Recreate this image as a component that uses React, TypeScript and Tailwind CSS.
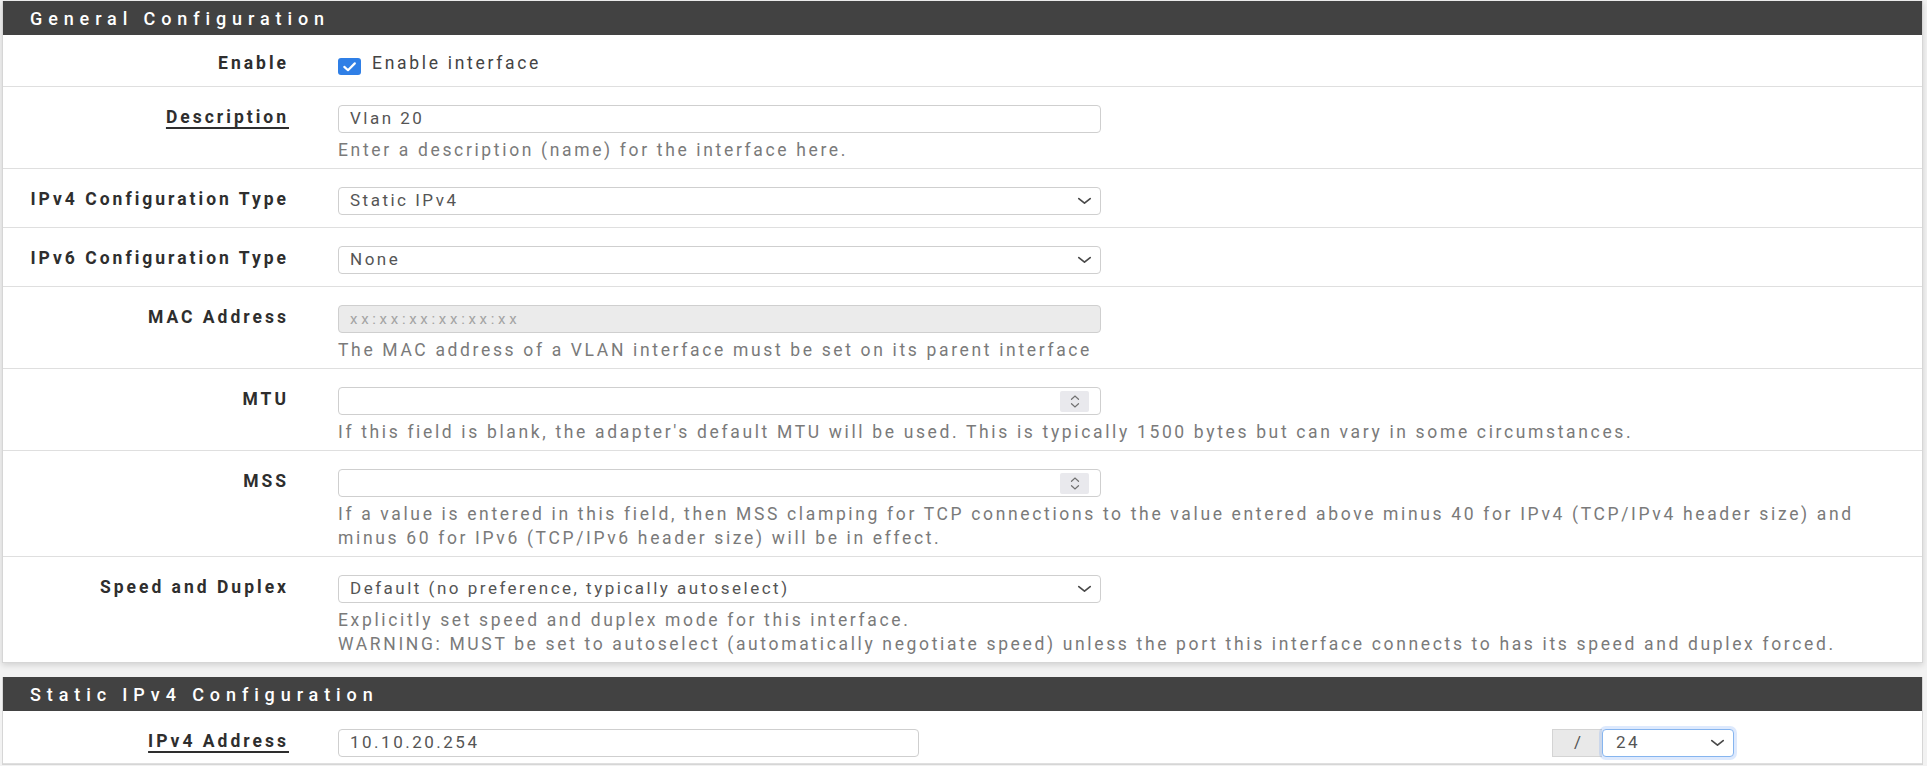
import React from "react";

const Chevron = () => (
  <svg width="15" height="8" viewBox="0 0 15 8" className="shrink-0">
    <path d="M1.8 1.6 L7.5 6.2 L13.2 1.6" fill="none" stroke="#4a4a4a" strokeWidth="1.7" strokeLinecap="round" strokeLinejoin="round" />
  </svg>
);

const Spinner = () => (
  <div className="flex h-[21px] w-[29px] shrink-0 flex-col items-center justify-center gap-[3px] rounded-[2px] bg-[#e9e9ed]">
    <svg width="12" height="5" viewBox="0 0 12 5">
      <path d="M2.5 4.3 L6 1 L9.5 4.3" fill="none" stroke="#707070" strokeWidth="1.2" strokeLinecap="round" />
    </svg>
    <svg width="12" height="5" viewBox="0 0 12 5">
      <path d="M2.5 0.7 L6 4 L9.5 0.7" fill="none" stroke="#707070" strokeWidth="1.2" strokeLinecap="round" />
    </svg>
  </div>
);

const PanelHeader = ({ title }: { title: string }) => (
  <div className="flex h-[34px] items-center bg-[#424242] pl-[27px] text-[18px] font-medium tracking-[5.9px] text-white">
    {title}
  </div>
);

const Label = ({ text, required }: { text: string; required?: boolean }) => (
  <div className="w-[286px] shrink-0 text-right text-[17.5px] font-bold leading-[24px] tracking-[3px] text-[#2e2e2e]">
    <span className={required ? "underline decoration-[1.5px] underline-offset-[4px]" : ""}>{text}</span>
  </div>
);

const Help = ({ children }: { children: React.ReactNode }) => (
  <div className="mt-[5px] whitespace-nowrap text-[17.5px] leading-[24px] tracking-[2.65px] text-[#7a7a7a]">{children}</div>
);

const Row = ({
  label,
  required,
  help,
  children,
}: {
  label: string;
  required?: boolean;
  help?: React.ReactNode;
  children: React.ReactNode;
}) => (
  <div className={"flex border-b border-[#dfdfdf] pt-[18px] " + (help ? "pb-[6px]" : "pb-[12px]")}>
    <Label text={label} required={required} />
    <div className="ml-[49px] flex flex-col">
      {children}
      {help ? <Help>{help}</Help> : null}
    </div>
  </div>
);

const inputBase =
  "flex h-[28px] items-center rounded-[4px] border border-[#cfcfcf] text-[17px] tracking-[2.5px] text-[#555555]";

const TextBox = ({ value, width = "w-[763px]" }: { value: string; width?: string }) => (
  <div className={inputBase + " bg-white pl-[11px] " + width}>{value}</div>
);

const SelectBox = ({ value }: { value: string }) => (
  <div className={inputBase + " w-[763px] justify-between bg-white pl-[11px] pr-[8px]"}>
    <span>{value}</span>
    <Chevron />
  </div>
);

const NumberBox = () => (
  <div className={inputBase + " w-[763px] justify-end bg-white pr-[11px]"}>
    <Spinner />
  </div>
);

export default function App() {
  return (
    <div className="h-[766px] overflow-hidden bg-[#f2f2f2] pl-[2px] pr-[4px] pt-[1px] font-['Roboto',sans-serif]">
      {/* General Configuration */}
      <div className="border-x border-b border-[#d6d6d6] bg-white shadow-[0_2px_6px_rgba(0,0,0,0.14)]">
        <PanelHeader title="General Configuration" />

        <div className="flex border-b border-[#dfdfdf] pb-[10px] pt-[15px]">
          <div className="w-[286px] shrink-0 text-right text-[17.5px] font-bold leading-[26px] tracking-[3px] text-[#2e2e2e]">
            Enable
          </div>
          <div className="ml-[49px] flex items-center">
            <div className="mt-[6px] flex h-[17px] w-[23px] items-center justify-center rounded-[3px] bg-[#2f7fe6]">
              <svg width="23" height="17" viewBox="0 0 23 17">
                <path d="M6.3 8.9 L10 12.2 L16.8 5.4" fill="none" stroke="#ffffff" strokeWidth="2.2" strokeLinecap="round" strokeLinejoin="round" />
              </svg>
            </div>
            <span className="ml-[11px] text-[17.5px] leading-[26px] tracking-[2.7px] text-[#444444]">Enable interface</span>
          </div>
        </div>

        <Row label="Description" required help="Enter a description (name) for the interface here.">
          <TextBox value="Vlan 20" />
        </Row>

        <Row label="IPv4 Configuration Type">
          <SelectBox value="Static IPv4" />
        </Row>

        <Row label="IPv6 Configuration Type">
          <SelectBox value="None" />
        </Row>

        <Row label="MAC Address" help="The MAC address of a VLAN interface must be set on its parent interface">
          <div className={inputBase + " w-[763px] bg-[#ebebeb] pl-[11px]"}>
            <span className="text-[15px] tracking-[3.7px] text-[#a3a3a3]">xx:xx:xx:xx:xx:xx</span>
          </div>
        </Row>

        <Row
          label="MTU"
          help="If this field is blank, the adapter's default MTU will be used. This is typically 1500 bytes but can vary in some circumstances."
        >
          <NumberBox />
        </Row>

        <Row
          label="MSS"
          help={
            <>
              If a value is entered in this field, then MSS clamping for TCP connections to the value entered above minus 40 for IPv4 (TCP/IPv4 header size) and
              <br />
              minus 60 for IPv6 (TCP/IPv6 header size) will be in effect.
            </>
          }
        >
          <NumberBox />
        </Row>

        <div className="flex pb-[6px] pt-[18px]">
          <Label text="Speed and Duplex" />
          <div className="ml-[49px] flex flex-col">
            <SelectBox value="Default (no preference, typically autoselect)" />
            <Help>
              Explicitly set speed and duplex mode for this interface.
              <br />
              WARNING: MUST be set to autoselect (automatically negotiate speed) unless the port this interface connects to has its speed and duplex forced.
            </Help>
          </div>
        </div>
      </div>

      {/* Static IPv4 Configuration */}
      <div className="mt-[14px] border-x border-b border-[#d6d6d6] bg-white">
        <PanelHeader title="Static IPv4 Configuration" />
        <div className="flex border-b border-[#dfdfdf] pb-[6px] pt-[18px]">
          <Label text="IPv4 Address" required />
          <div className="ml-[49px] flex items-center">
            <TextBox value="10.10.20.254" width="w-[581px]" />
            <div className="ml-[633px] flex items-center">
              <div className="flex h-[28px] w-[50px] items-center justify-center border border-r-0 border-[#d4d4d4] bg-[#e9e9e9] text-[17px] text-[#555555]">
                /
              </div>
              <div className="flex h-[28px] w-[132px] items-center justify-between rounded-[4px] border border-[#86b5ef] bg-white pl-[13px] pr-[8px] text-[17px] tracking-[2.5px] text-[#555555] shadow-[0_0_0_3px_rgba(66,133,244,0.18)]">
                <span>24</span>
                <Chevron />
              </div>
            </div>
          </div>
        </div>
      </div>
    </div>
  );
}
